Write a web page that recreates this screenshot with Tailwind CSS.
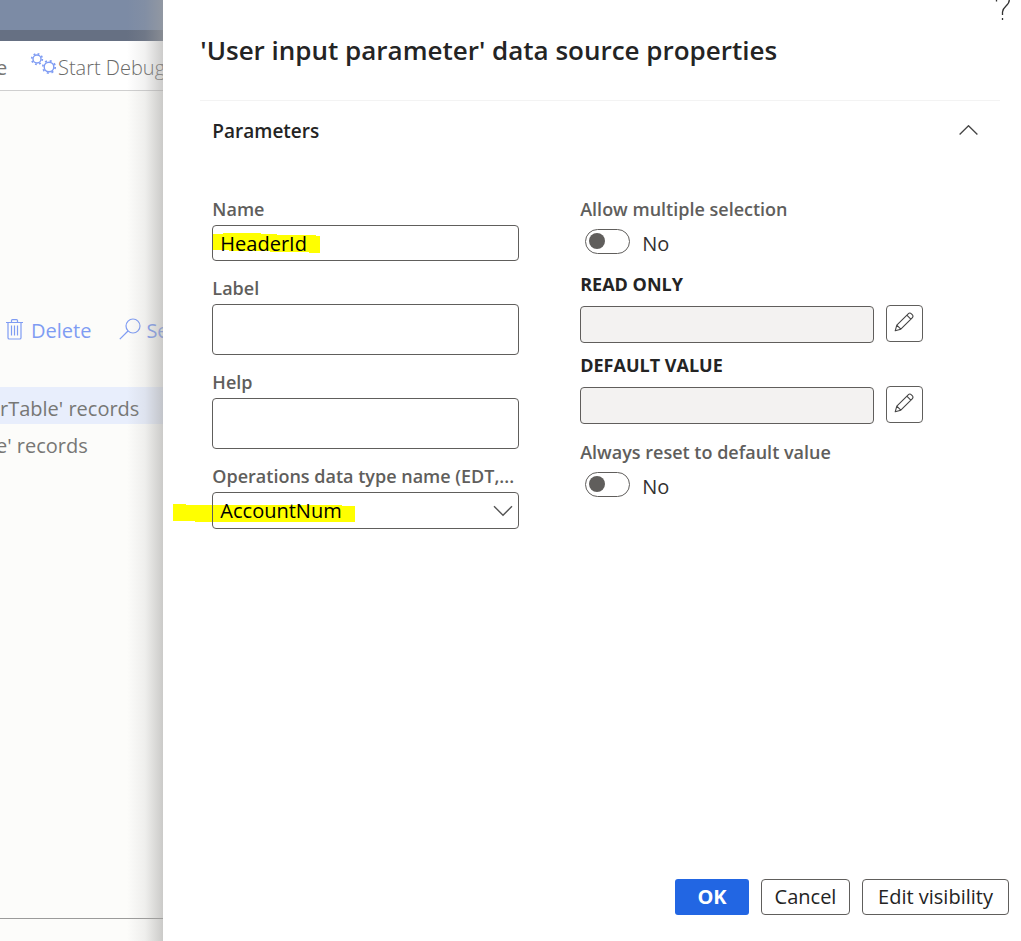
<!DOCTYPE html>
<html lang="en">
<head>
<meta charset="utf-8">
<title>Data source properties</title>
<script src="https://cdn.jsdelivr.net/npm/@tailwindcss/browser@4"></script>
</head>
<body class="flex min-h-screen overflow-hidden bg-[#fcfcfa] font-['Open_Sans','Noto_Sans',sans-serif] text-[#242424]">

<!-- Dimmed page behind the dialog -->
<aside class="relative flex w-[16%] shrink-0 flex-col overflow-hidden whitespace-nowrap text-xl text-[#777775]">
  <div class="h-[30px] bg-[#7c8ba5]"></div>
  <div class="h-[11px] bg-[#667083]"></div>
  <div class="flex h-[50px] items-center border-b border-[#cfcfcf] bg-white pt-1">
    <span class="w-[30px] shrink-0"><span class="-ml-1">e</span></span>
    <button type="button" class="flex items-center font-light text-[#6a6a68]">
      <svg class="mb-2 h-6 w-7 shrink-0" viewBox="0 0 28 24" fill="none" stroke="#7f9cf3">
        <circle cx="7" cy="7" r="4" stroke-width="1.4"/>
        <circle cx="7" cy="7" r="5.3" stroke-width="1.7" stroke-dasharray="1.8 2.36"/>
        <circle cx="19" cy="15" r="4.8" stroke-width="1.4"/>
        <circle cx="19" cy="15" r="6.2" stroke-width="1.7" stroke-dasharray="2 2.87"/>
      </svg>Start Debugging
    </button>
  </div>
  <div class="mt-[218px] flex h-11 items-center gap-7 pl-[6px] text-xl text-[#7f9cf3]">
    <button type="button" class="flex items-center gap-2">
      <svg class="mb-1 h-[22px] w-[17px] shrink-0" viewBox="0 0 17 22" fill="none" stroke="currentColor" stroke-width="1.2">
        <path d="M0 4.5h17M2 4.5v15.2q0 1.3 1.3 1.3h10.4q1.3 0 1.3-1.3V4.5M5.5 4.5V2.6q0-1 1-1h4q1 0 1 1v1.9M5.5 7.5v10M8.5 7.5v10M11.5 7.5v10"/>
      </svg>Delete
    </button>
    <button type="button" class="flex items-center gap-[5px]">
      <svg class="mb-1 h-[22px] w-[22px] shrink-0" viewBox="0 0 22 22" fill="none" stroke="currentColor" stroke-width="1.2">
        <circle cx="14" cy="8" r="7"/><path d="M9 13L.8 21.2"/>
      </svg>Search
    </button>
  </div>
  <div class="mt-[34px] flex h-[37px] items-center bg-[#e8eefc] pt-[6px] font-medium">rTable' records</div>
  <div class="flex h-[37px] items-center pt-[6px] font-medium"><span class="-ml-1">e' records</span></div>
  <div class="mt-auto h-[23px] border-t border-[#9b9b9a]"></div>
  <div class="absolute inset-y-0 right-0 w-9 bg-linear-to-r from-[#a3a2a0]/0 via-[#a3a2a0]/15 to-[#a3a2a0]/55"></div>
</aside>

<main class="relative flex flex-1 flex-col bg-white">
  <button type="button" aria-label="Help" class="absolute -top-2 right-[10px]">
    <svg class="h-7 w-4" viewBox="0 0 16 28" fill="none" stroke="#333" stroke-width="1.3">
      <path d="M1.5 9.5V8C1.5 4 4 1.5 8 1.5S14.300 4 14.300 8C14.300 14 7.500 14.500 7.500 20V23"/><path d="M7.500 26v2"/>
    </svg>
  </button>

  <header class="mr-[21px] ml-[37px] flex h-[101px] items-center border-b border-[#f3f3f3]">
    <h1 class="text-[26px] font-semibold">'User input parameter' data source properties</h1>
  </header>

  <section class="pl-[49px] pr-[98px]">
    <div class="-mr-[56px] flex h-[60px] items-center justify-between">
      <h2 class="text-[19px] font-semibold">Parameters</h2>
      <button type="button" aria-label="Collapse Parameters">
        <svg class="h-3 w-5" viewBox="0 0 20 12" fill="none" stroke="#444" stroke-width="1.3"><path d="M.6 9.500L9.500.7l8.900 8.800"/></svg>
      </button>
    </div>

    <form class="mt-[37px] grid grid-cols-[307fr_343fr] gap-x-[61px]">
      <div class="flex flex-col gap-4 text-lg text-[#605e5c]">
        <div class="flex flex-col gap-1">
          <label for="name" class="h-[23px] leading-[23px] font-semibold">Name</label>
          <div class="relative">
            <svg class="absolute top-2 left-0 h-5 w-[108px]" viewBox="0 0 108 20" preserveAspectRatio="none" fill="#ff0"><path d="M-1 1H11V0H49V1H65V2H104V3H108V20H97V19H58V18H17V17H0z"/></svg>
            <input id="name" value="HeaderId" class="relative block h-9 w-full rounded-[4px] border border-[#605e5c] bg-transparent px-[7px] text-xl text-black">
          </div>
        </div>
        <div class="flex flex-col gap-1">
          <label for="label" class="h-[23px] leading-[23px] font-semibold">Label</label>
          <textarea id="label" class="block h-[51px] w-full resize-none rounded-[4px] border border-[#605e5c] px-[7px]"></textarea>
        </div>
        <div class="flex flex-col gap-1">
          <label for="help" class="h-[23px] leading-[23px] font-semibold">Help</label>
          <textarea id="help" class="block h-[51px] w-full resize-none rounded-[4px] border border-[#605e5c] px-[7px]"></textarea>
        </div>
        <div class="flex flex-col gap-1">
          <label for="edt" class="h-[23px] leading-[23px] font-semibold whitespace-nowrap">Operations data type name (EDT,...</label>
          <div class="relative">
            <svg class="absolute top-3 -left-[39px] h-[18px] w-[182px]" viewBox="0 0 182 18" preserveAspectRatio="none" fill="#ff0"><path d="M0 0H13V1H169V2H182V18H22V17H0z"/></svg>
            <select id="edt" class="relative block h-[37px] w-full appearance-none rounded-[4px] border border-[#605e5c] bg-transparent px-[7px] text-xl text-black"><option>AccountNum</option></select>
            <svg class="pointer-events-none absolute top-[13px] right-[6px] h-3 w-5" viewBox="0 0 20 12" fill="none" stroke="#555" stroke-width="1.4"><path d="M1 1.200l9 9 9-9"/></svg>
          </div>
        </div>
      </div>

      <div class="flex flex-col text-lg text-[#605e5c]">
        <label for="multi" class="h-[23px] leading-[23px] font-semibold">Allow multiple selection</label>
        <div class="mt-2 flex h-[25px] items-center gap-3 pl-[5px]">
          <input id="multi" type="checkbox" role="switch" class="h-[25px] w-[45px] appearance-none rounded-full border border-[#605e5c] p-[3px] before:block before:size-4 before:rounded-full before:bg-[#605e5c]">
          <span class="pt-1 text-xl text-[#323130]">No</span>
        </div>
        <label for="readonly" class="mt-[19px] h-[23px] leading-[23px] font-bold text-[#242424]">READ ONLY</label>
        <div class="mt-[9px] flex items-start gap-3">
          <input id="readonly" readonly class="mt-px h-[37px] min-w-0 flex-1 rounded-[4px] border border-[#605e5c] bg-[#f3f2f1] px-2">
          <button type="button" aria-label="Edit read only" class="grid h-[37px] w-[37px] place-items-center rounded-[4px] border border-[#605e5c]">
            <svg class="mr-px mb-1 size-5" viewBox="0 0 20 20" fill="none" stroke="#444" stroke-width="1.100" stroke-linejoin="round"><path d="M1.200 18.800l1.600-5.600L14.200 1.800a2.300 2.300 0 0 1 3.200 0l.8.8a2.300 2.300 0 0 1 0 3.200L6.800 17.200zM2.800 13.200l4 4M12.800 3.200l4 4"/></svg>
          </button>
        </div>
        <label for="defaultvalue" class="mt-[11px] h-[23px] leading-[23px] font-bold text-[#242424]">DEFAULT VALUE</label>
        <div class="mt-[9px] flex items-start gap-3">
          <input id="defaultvalue" readonly class="mt-px h-[37px] min-w-0 flex-1 rounded-[4px] border border-[#605e5c] bg-[#f3f2f1] px-2">
          <button type="button" aria-label="Edit default value" class="grid h-[37px] w-[37px] place-items-center rounded-[4px] border border-[#605e5c]">
            <svg class="mr-px mb-1 size-5" viewBox="0 0 20 20" fill="none" stroke="#444" stroke-width="1.100" stroke-linejoin="round"><path d="M1.200 18.800l1.600-5.600L14.200 1.800a2.300 2.300 0 0 1 3.200 0l.8.8a2.300 2.300 0 0 1 0 3.200L6.800 17.200zM2.800 13.200l4 4M12.800 3.200l4 4"/></svg>
          </button>
        </div>
        <label for="reset" class="mt-[17px] h-[23px] leading-[23px] font-semibold">Always reset to default value</label>
        <div class="mt-2 flex h-[25px] items-center gap-3 pl-[5px]">
          <input id="reset" type="checkbox" role="switch" class="h-[25px] w-[45px] appearance-none rounded-full border border-[#605e5c] p-[3px] before:block before:size-4 before:rounded-full before:bg-[#605e5c]">
          <span class="pt-1 text-xl text-[#323130]">No</span>
        </div>
      </div>
    </form>
  </section>

  <footer class="mt-auto flex justify-end gap-3 pr-3 pb-[26px] text-xl">
    <button type="button" class="h-9 w-[74px] rounded-[3px] bg-[#2266e3] font-bold text-white">OK</button>
    <button type="button" class="h-9 w-[89px] rounded-[4px] border border-[#605e5c] font-medium">Cancel</button>
    <button type="button" class="h-9 w-[147px] rounded-[4px] border border-[#605e5c] font-medium">Edit visibility</button>
  </footer>
</main>
</body>
</html>
